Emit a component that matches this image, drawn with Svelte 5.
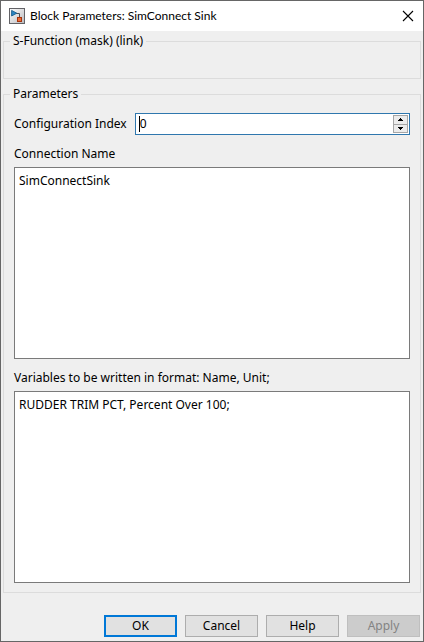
<script>
  let index = $state('0');
  let connection = $state('SimConnectSink');
  let variables = $state('RUDDER TRIM PCT, Percent Over 100;');

  function step(delta) {
    index = String((parseInt(index, 10) || 0) + delta);
  }
</script>

<div class="dialog">
  <header>
    <svg class="logo" width="16" height="16" viewBox="0 0 16 16" aria-hidden="true">
      <defs>
        <linearGradient id="face" x1="0" y1="0" x2="1" y2="1">
          <stop offset="0" stop-color="#ffffff" />
          <stop offset="1" stop-color="#b9b9bd" />
        </linearGradient>
      </defs>
      <rect x="0.5" y="0.5" width="15" height="15" fill="url(#face)" stroke="#626266" />
      <path d="M7 5.5H10.5V9" fill="none" stroke="#4a4f58" />
      <path d="M2.6 2.4L7.8 5.2L2.6 8Z" fill="#2a86c4" stroke="#175c8c" stroke-width="0.9" />
      <rect x="8.5" y="9.5" width="4" height="4" fill="#ee6c35" stroke="#a5330c" />
    </svg>
    <h1>Block Parameters: SimConnect Sink</h1>
    <button class="close" type="button" aria-label="Close">
      <svg width="12" height="12" viewBox="0 0 12 12" aria-hidden="true">
        <path d="M1 1L11 11M11 1L1 11" stroke="#000" stroke-width="1.1" />
      </svg>
    </button>
  </header>

  <form onsubmit={(e) => e.preventDefault()}>
    <fieldset class="mask">
      <legend>S-Function (mask) (link)</legend>
    </fieldset>

    <fieldset class="params">
      <legend>Parameters</legend>
      <div class="row">
        <label for="index">Configuration Index</label>
        <div class="spin">
          <input id="index" type="text" inputmode="numeric" bind:value={index} />
          <span class="caret"></span>
          <div class="steps">
            <button type="button" aria-label="Increase" onclick={() => step(1)}>
              <svg width="5" height="3" viewBox="0 0 5 3" shape-rendering="crispEdges"><path d="M2 0H3V1H4V2H5V3H0V2H1V1H2Z" /></svg>
            </button>
            <button type="button" aria-label="Decrease" onclick={() => step(-1)}>
              <svg width="5" height="3" viewBox="0 0 5 3" shape-rendering="crispEdges"><path d="M0 0H5V1H4V2H3V3H2V2H1V1H0Z" /></svg>
            </button>
          </div>
        </div>
      </div>
      <label class="above" for="connection">Connection Name</label>
      <textarea id="connection" spellcheck="false" bind:value={connection}></textarea>
      <label class="above" for="variables">Variables to be written in format: Name, Unit;</label>
      <textarea id="variables" spellcheck="false" bind:value={variables}></textarea>
    </fieldset>

    <footer>
      <button class="primary" type="submit">OK</button>
      <button type="button">Cancel</button>
      <button type="button">Help</button>
      <button type="button" disabled>Apply</button>
    </footer>
  </form>
</div>

<style>
  :global(body) {
    background: #efefef;
  }
  .dialog {
    box-sizing: border-box;
    border: 1px solid #666;
    background: #efefef;
    color: #000;
    font: 12px/16px Tahoma, "Noto Sans", sans-serif;
  }
  header {
    display: flex;
    align-items: center;
    height: 30px;
    padding: 0 9px 0 8px;
    background: #fff;
  }
  h1 {
    flex: 1;
    margin: 0 0 0 5px;
    font: 12px/16px "Segoe UI", Lato, sans-serif;
  }
  .close {
    display: flex;
    padding: 0;
    border: 0;
    background: none;
  }
  fieldset {
    min-width: 0;
    margin: 0 2px;
    border: 1px solid #dcdcdc;
    border-radius: 0;
  }
  legend {
    margin-left: -1px;
    padding: 0 3px;
    line-height: 16px;
  }
  .mask {
    height: 46px;
    box-sizing: border-box;
    margin-top: 2px;
    padding: 0 7px;
  }
  .params {
    margin-top: 7px;
    padding: 11px 10px 9px;
  }
  .params legend {
    margin-left: -4px;
  }
  .row {
    display: flex;
    align-items: center;
    gap: 8px;
  }
  .spin {
    position: relative;
    display: flex;
    flex: 1;
    box-sizing: border-box;
    height: 22px;
    padding: 1px;
    border: 1px solid #2f77ae;
    background: #fff;
  }
  .spin input {
    flex: 1;
    min-width: 0;
    padding: 0 3px;
    border: 0;
    outline: 0;
    background: none;
    font: inherit;
  }
  .caret {
    position: absolute;
    top: 2px;
    left: 3px;
    width: 1px;
    height: 16px;
    background: #000;
  }
  .steps {
    display: flex;
    flex-direction: column;
    width: 15px;
    box-sizing: border-box;
    border: 1px solid #a6a6a6;
  }
  .steps button {
    display: flex;
    flex: 1;
    align-items: center;
    justify-content: center;
    padding: 0;
    border: 0;
    background: #ececec;
  }
  .steps button + button {
    border-top: 1px solid #a6a6a6;
  }
  .above {
    display: block;
    margin: 11px 0 5px;
  }
  textarea {
    display: block;
    box-sizing: border-box;
    width: 100%;
    height: 192px;
    margin: 0;
    padding: 5px 4px;
    border: 1px solid #7a7a7a;
    border-radius: 0;
    outline: 0;
    resize: none;
    background: #fff;
    color: #000;
    font: inherit;
  }
  footer {
    display: flex;
    justify-content: flex-end;
    gap: 8px;
    padding: 22px 3px 4px;
  }
  footer button {
    width: 73px;
    height: 22px;
    padding: 0;
    border: 1px solid #adadad;
    border-radius: 0;
    background: #e1e1e1;
    color: #000;
    font: inherit;
  }
  footer .primary {
    border: 2px solid #0078d7;
  }
  footer button:disabled {
    border-color: #bfbfbf;
    background: #ccc;
    color: #838383;
  }
</style>
